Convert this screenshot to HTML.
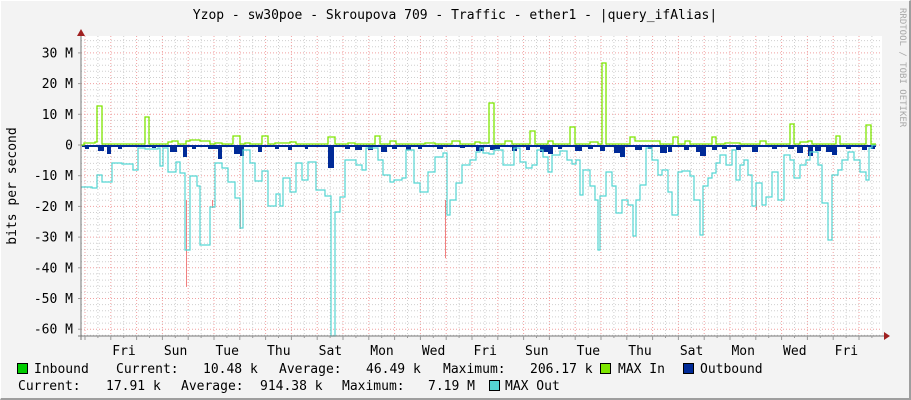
<!DOCTYPE html>
<html><head><meta charset="utf-8"><style>
html,body{margin:0;padding:0;}
body{width:911px;height:400px;overflow:hidden;background:#f3f3f3;position:relative;font-family:"DejaVu Sans Mono","Liberation Mono",monospace;}
#frame{position:absolute;left:0;top:0;border-right:2px solid #9e9e9e;border-bottom:2px solid #9e9e9e;border-left:1px solid #fff;border-top:1px solid #fff;box-sizing:border-box;width:911px;height:400px;}
svg{position:absolute;left:0;top:0;}
text{font-family:"DejaVu Sans Mono","Liberation Mono",monospace;font-size:13px;fill:#000;}
</style></head><body>
<div id="frame"></div>
<svg id="g" width="911" height="400" xmlns="http://www.w3.org/2000/svg"></svg>
<script>
var s=document.getElementById('g');var h='';
var L=81,R=882,T=36,B=336;
h+='<rect x="'+L+'" y="'+T+'" width="'+(R-L)+'" height="'+(B-T)+'" fill="#fff"/>';
for(var v=-62;v<=36;v+=2){var y=145-v*3.07;if(y<T||y>B)continue;
 var maj=(v%10==0);h+='<line x1="'+L+'" x2="'+R+'" y1="'+y.toFixed(1)+'" y2="'+y.toFixed(1)+'" stroke="'+(maj?'#f0a0a0':'#cfcfcf')+'" stroke-dasharray="1,2"/>';}
for(var i=-1;i<70;i++){var x=85+i*12.9;if(x<L||x>R)continue;var maj=(i%2==0);
 h+='<line y1="'+T+'" y2="'+B+'" x1="'+x.toFixed(1)+'" x2="'+x.toFixed(1)+'" stroke="'+(maj?'#f0a0a0':'#cfcfcf')+'" stroke-dasharray="1,2"/>';}
var bd=[[85,4,3],[98,6,5],[107,4,8],[118,4,3],[152,4,2],[170,7,6],[183,4,11],[192,4,3],[208,6,3],[214,4,3],[218,4,13],[234,6,8],[240,4,10],[258,4,6],[275,4,3],[288,4,4],[305,3,3],[328,6,22],[345,5,3],[355,7,4],[368,5,4],[381,6,6],[392,5,3],[406,5,4],[418,4,3],[437,6,3],[460,5,2],[476,8,5],[490,5,4],[495,5,3],[512,5,5],[526,4,4],[540,8,6],[548,5,8],[558,4,3],[575,7,5],[588,5,3],[600,5,5],[614,6,7],[620,5,11],[635,7,4],[648,4,3],[660,7,7],[668,4,6],[684,5,4],[696,8,6],[700,6,10],[712,5,4],[722,5,3],[736,5,4],[752,6,6],[772,5,3],[788,6,3],[797,6,7],[808,5,10],[815,6,5],[826,8,6],[832,5,9],[846,5,3],[862,5,4],[871,4,3]];
h+='<rect x="82" y="145" width="794" height="2" fill="#002a97"/>';
bd.forEach(function(d){h+='<rect x="'+d[0]+'" y="145" width="'+d[1]+'" height="'+(d[2]+1)+'" fill="#002a97"/>';});
function step(a,end){var p='M'+a[0][0]+','+a[0][1];for(var i=1;i<a.length;i++){p+=' H'+a[i][0]+' V'+a[i][1];}p+=' H'+end;return p;}
var cy=[[81,187],[92,188],[97,175],[102,182],[112,163],[122,164],[133,170],[138,148],[145,149],[158,148],[160,166],[163,148],[168,172],[176,162],[180,173],[185,250],[190,176],[197,186],[200,245],[210,207],[215,163],[222,168],[228,182],[235,198],[240,228],[243,150],[250,163],[255,181],[262,171],[268,206],[276,194],[280,206],[283,178],[290,192],[296,163],[302,180],[308,162],[316,190],[325,196],[331,336],[335,212],[340,197],[345,160],[356,165],[362,170],[366,148],[378,160],[383,175],[390,182],[394,180],[402,178],[406,150],[410,150],[414,183],[420,192],[428,172],[435,157],[443,153],[447,215],[450,200],[456,183],[462,165],[470,160],[476,152],[480,148],[483,153],[489,154],[494,150],[500,150],[503,165],[510,165],[514,148],[520,162],[526,168],[532,165],[537,150],[543,157],[548,172],[552,155],[560,151],[567,160],[572,164],[576,160],[580,195],[583,170],[590,186],[595,200],[598,250],[600,196],[606,172],[612,186],[616,213],[622,200],[628,205],[633,236],[636,200],[640,185],[646,148],[652,160],[658,175],[662,170],[668,192],[672,215],[678,172],[682,171],[690,176],[694,200],[700,235],[703,186],[708,178],[712,173],[716,163],[720,155],[726,165],[732,150],[736,180],[740,165],[744,160],[748,175],[752,206],[756,183],[762,205],[766,197],[772,172],[778,200],[784,155],[790,160],[794,178],[800,165],[806,160],[810,152],[818,165],[822,203],[828,240],[832,175],[838,170],[842,160],[848,152],[854,160],[860,172],[866,180],[869,148],[872,145]];
[[186,287],[212,208],[240,229],[445,258],[756,210]].forEach(function(p){h+='<path d="M'+(p[0]+0.5)+',200 V'+p[1]+'" fill="none" stroke="#f08080" stroke-width="1"/>';});
h+='<path d="'+step(cy,876)+'" fill="none" stroke="#55d6d3" stroke-width="1.2"/>';
var gr=[[81,145],[84,143],[92,143],[95,142],[97,106],[102,144],[145,117],[149,144],[168,142],[172,141],[178,144],[186,141],[190,140],[200,141],[210,144],[215,143],[222,144],[233,136],[240,144],[245,143],[250,144],[262,136],[268,144],[275,143],[290,142],[296,144],[328,137],[335,144],[348,143],[355,144],[375,136],[380,144],[390,141],[396,144],[425,143],[435,144],[452,141],[460,144],[475,142],[480,143],[489,103],[494,144],[505,141],[512,144],[530,131],[535,144],[548,141],[553,144],[570,127],[575,144],[590,142],[598,144],[602,63],[606,144],[630,137],[635,141],[650,141],[660,144],[673,137],[678,144],[685,141],[690,144],[712,137],[716,144],[725,143],[740,144],[760,141],[766,144],[790,124],[794,144],[800,142],[808,141],[812,144],[836,136],[840,144],[866,125],[871,144]];
h+='<path d="'+step(gr,876)+'" fill="none" stroke="#7ee600" stroke-width="1.3"/>';
h+='<line x1="81" x2="81" y1="30" y2="340" stroke="#777"/>';
h+='<line x1="78" x2="886" y1="336" y2="336" stroke="#777"/>';
h+='<path d="M77,36 L81,29 L85,36 Z" fill="#a02020"/>';
h+='<path d="M884,332 L890,336 L884,340 Z" fill="#a02020"/>';
for(var i=0;i<70;i++){var x=85+i*12.9;if(x>R)break;h+='<line x1="'+x.toFixed(1)+'" x2="'+x.toFixed(1)+'" y1="336" y2="'+(i%2==0?340:338)+'" stroke="#999"/>';}
for(var v=-60;v<=30;v+=10){var y=145-v*3.07;h+='<line x1="78" x2="81" y1="'+y.toFixed(1)+'" y2="'+y.toFixed(1)+'" stroke="#999"/>';
 h+='<text x="73" y="'+(y+4.5).toFixed(1)+'" text-anchor="end">'+(v==0?'0':v+' M')+'</text>';}
var days=['Fri','Sun','Tue','Thu','Sat','Mon','Wed','Fri','Sun','Tue','Thu','Sat','Mon','Wed','Fri'];
days.forEach(function(d,i){h+='<text x="'+(124+i*51.6).toFixed(1)+'" y="355" text-anchor="middle">'+d+'</text>';});
h+='<text x="455" y="19" text-anchor="middle">Yzop - sw30poe - Skroupova 709 - Traffic - ether1 - |query_ifAlias|</text>';
h+='<text transform="translate(16,186) rotate(-90)" text-anchor="middle">bits per second</text>';
h+='<text transform="translate(900,8) rotate(90)" style="font-size:9px;fill:#a8a8a8">RRDTOOL / TOBI OETIKER</text>';
function sq(x,y,c){h+='<rect x="'+x+'" y="'+y+'" width="10" height="10" fill="'+c+'" stroke="#000" stroke-width="1"/>';}
function t(x,y,s){h+='<text x="'+x+'" y="'+y+'" xml:space="preserve">'+s+'</text>';}
sq(17.5,363.5,'#00cc00');t(34,373,'Inbound');t(116,373,'Current:');t(203,373,'10.48 k');t(279,373,'Average:');t(366,373,'46.49 k');t(443,373,'Maximum:');t(530,373,'206.17 k');
sq(600.5,363.5,'#7ee600');t(618,373,'MAX In');sq(683.5,363.5,'#002a97');t(700,373,'Outbound');
t(18,390,'Current:');t(106,390,'17.91 k');t(181,390,'Average:');t(260,390,'914.38 k');t(342,390,'Maximum:');t(428,390,'7.19 M');
sq(489.5,380.5,'#55d6d3');t(505,390,'MAX Out');
s.innerHTML=h;
</script>
</body></html>
